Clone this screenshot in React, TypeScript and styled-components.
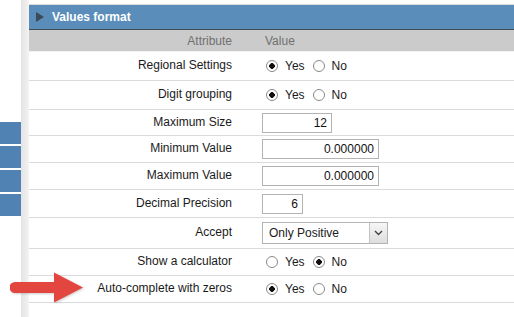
import styled, { createGlobalStyle } from 'styled-components';

const GlobalStyle = createGlobalStyle`
  body {
    margin: 0;
    background: #fff;
    font-family: 'Liberation Sans', Arial, sans-serif;
  }
`;

type Row = {
  label: string;
  height: number;
  kind: 'radio' | 'input' | 'select';
  yes?: boolean;
  value?: string;
  width?: number;
};

const rows: Row[] = [
  { label: 'Regional Settings', height: 29, kind: 'radio', yes: true },
  { label: 'Digit grouping', height: 29, kind: 'radio', yes: true },
  { label: 'Maximum Size', height: 26, kind: 'input', value: '12', width: 70 },
  { label: 'Minimum Value', height: 27, kind: 'input', value: '0.000000', width: 117 },
  { label: 'Maximum Value', height: 27, kind: 'input', value: '0.000000', width: 117 },
  { label: 'Decimal Precision', height: 28, kind: 'input', value: '6', width: 41 },
  { label: 'Accept', height: 31, kind: 'select', value: 'Only Positive' },
  { label: 'Show a calculator', height: 27, kind: 'radio', yes: false },
  { label: 'Auto-complete with zeros', height: 27, kind: 'radio', yes: true },
];

export default function App(): JSX.Element {
  return (
    <Page>
      <GlobalStyle />
      <Sidebar>
        <SideTab />
        <SideTab />
        <SideTab />
        <SideTab />
      </Sidebar>
      <Divider />
      <Panel>
        <PanelTitle>
          <Caret />
          Values format
        </PanelTitle>
        <Grid>
          <HeadCell $align="right">Attribute</HeadCell>
          <HeadCell $align="left">Value</HeadCell>
          {rows.map((row) => (
            <RowLine key={row.label} $h={row.height}>
              <Label>{row.label}</Label>
              <ValueCell>
                {row.kind === 'radio' && (
                  <>
                    <Radio $checked={!!row.yes} />
                    <RadioText>Yes</RadioText>
                    <Radio $checked={!row.yes} />
                    <RadioText>No</RadioText>
                  </>
                )}
                {row.kind === 'input' && <TextBox $w={row.width!}>{row.value}</TextBox>}
                {row.kind === 'select' && (
                  <SelectBox>
                    <span>{row.value}</span>
                    <SelectButton>
                      <svg width="9" height="6" viewBox="0 0 9 6">
                        <path d="M1 1 L4.5 4.5 L8 1" fill="none" stroke="#444" strokeWidth="1.4" />
                      </svg>
                    </SelectButton>
                  </SelectBox>
                )}
              </ValueCell>
            </RowLine>
          ))}
        </Grid>
      </Panel>
      <Arrow width="80" height="40" viewBox="0 0 80 40">
        <path
          d="M5 10 L44 10 L44 0.5 L73 15.5 L44 30.5 L44 21 L5 21 A5.5 5.5 0 0 1 5 10 Z"
          fill="#e2463f"
        />
      </Arrow>
    </Page>
  );
}

const Page = styled.div`
  position: relative;
  display: flex;
  width: 514px;
  height: 317px;
  overflow: hidden;
  background: #fff;
`;

const Sidebar = styled.div`
  width: 21px;
  display: flex;
  flex-direction: column;
  gap: 2px;
  padding-top: 122px;
`;

const SideTab = styled.div`
  height: 22px;
  background: #5083b3;
`;

const Divider = styled.div`
  width: 8px;
  background: linear-gradient(to right, #e4e4e4, #ececec 60%, #f4f4f4);
`;

const Panel = styled.div`
  flex: 1;
  padding-top: 4px;
`;

const PanelTitle = styled.div`
  display: flex;
  align-items: center;
  gap: 8px;
  height: 24px;
  padding-left: 7px;
  border-top: 1px solid #dcdcdc;
  background: #5a8dba;
  border-bottom: 1px solid #3f4c58;
  color: #fff;
  font-size: 12px;
  font-weight: bold;
`;

const Caret = styled.span`
  width: 0;
  height: 0;
  border-top: 5px solid transparent;
  border-bottom: 5px solid transparent;
  border-left: 8px solid #3b4a57;
`;

const Grid = styled.div`
  display: grid;
  grid-template-columns: 224px 1fr;
`;

const HeadCell = styled.div<{ $align: 'left' | 'right' }>`
  height: 21px;
  display: flex;
  align-items: center;
  justify-content: ${(p) => (p.$align === 'right' ? 'flex-end' : 'flex-start')};
  padding: ${(p) => (p.$align === 'right' ? '0 21px 0 0' : '0 0 0 12px')};
  background: #cbcbcb;
  border-bottom: 1px solid #f2f2f2;
  color: #707070;
  font-size: 12px;
`;

const RowLine = styled.div<{ $h: number }>`
  grid-column: 1 / -1;
  display: grid;
  grid-template-columns: 224px 1fr;
  height: ${(p) => p.$h}px;
  box-sizing: border-box;
  border-bottom: 1px solid #dadada;
  font-size: 12px;
  color: #1a1a1a;
`;

const Label = styled.div`
  display: flex;
  align-items: center;
  justify-content: flex-end;
  padding-right: 21px;
  padding-bottom: 2px;
`;

const ValueCell = styled.div`
  display: flex;
  align-items: center;
  padding-left: 9px;
`;

const Radio = styled.span<{ $checked: boolean }>`
  box-sizing: border-box;
  width: 12px;
  height: 12px;
  margin-left: 4px;
  border-radius: 50%;
  border: 1px solid #8a8a8a;
  background: radial-gradient(circle, ${(p) => (p.$checked ? '#111 0 2.6px' : '#fff 0 0')}, #fff 3px);
`;

const RadioText = styled.span`
  margin: 0 4px 0 7px;
  font-size: 12px;
`;

const TextBox = styled.div<{ $w: number }>`
  box-sizing: border-box;
  width: ${(p) => p.$w}px;
  height: 20px;
  display: flex;
  align-items: center;
  justify-content: flex-end;
  padding-right: 4px;
  border: 1px solid #b3b3b3;
  background: #fff;
  color: #111;
`;

const SelectBox = styled.div`
  box-sizing: border-box;
  width: 126px;
  height: 22px;
  display: flex;
  align-items: center;
  justify-content: space-between;
  padding-left: 6px;
  border: 1px solid #b3b3b3;
  background: #fff;
`;

const SelectButton = styled.div`
  width: 17px;
  height: 100%;
  display: flex;
  align-items: center;
  justify-content: center;
  border-left: 1px solid #c4c4c4;
  background: linear-gradient(#f6f6f6, #dedede);
`;

const Arrow = styled.svg`
  position: absolute;
  left: 10px;
  top: 272px;
  filter: drop-shadow(1px 1px 1px rgba(0, 0, 0, 0.2));
`;
